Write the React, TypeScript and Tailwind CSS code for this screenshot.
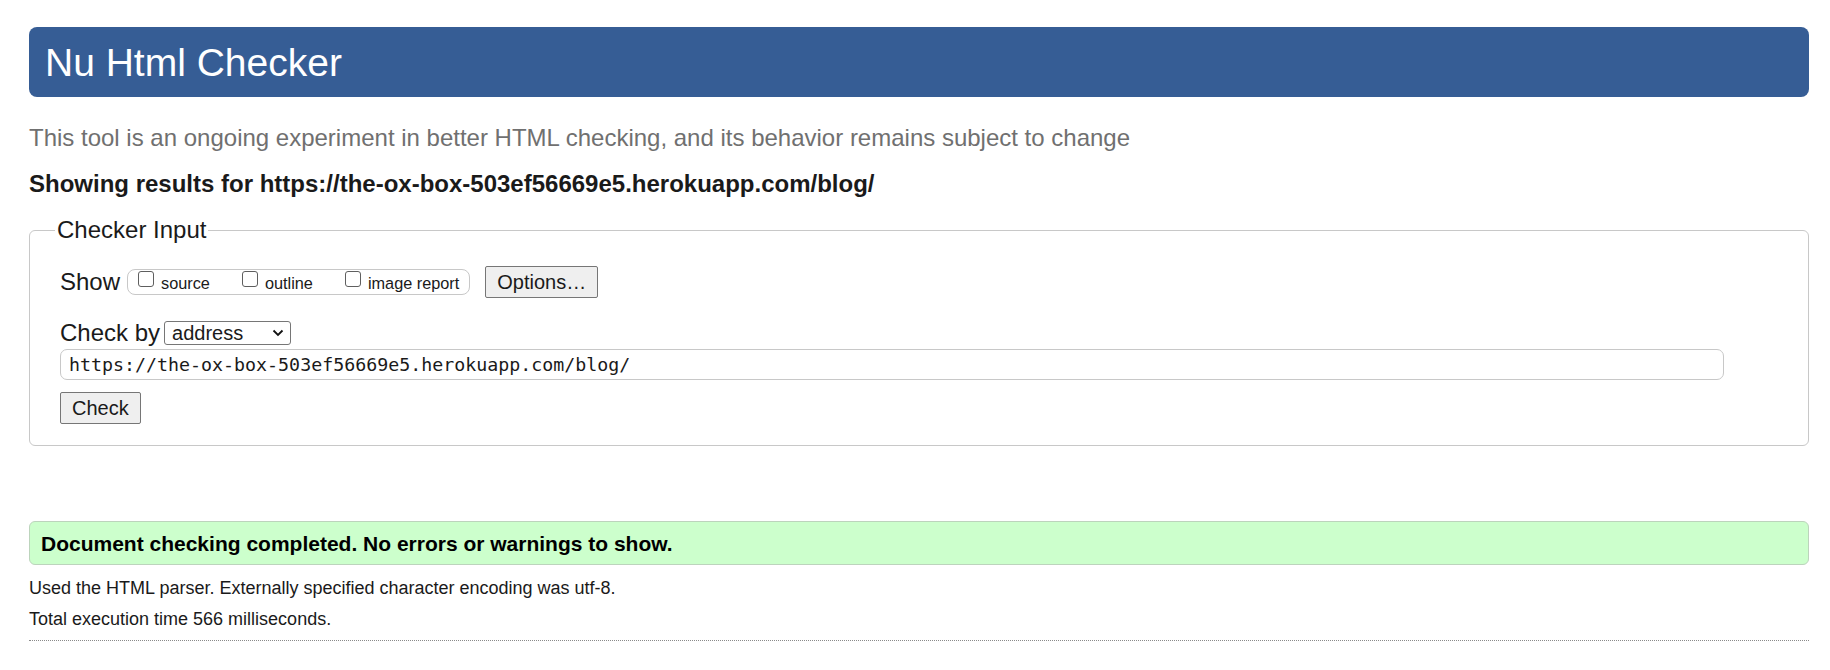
import React from 'react';

const url = 'https://the-ox-box-503ef56669e5.herokuapp.com/blog/';

const Box = ({ label }: { label: string }) => (
  <label className="flex items-start gap-[7px]">
    <span className="mt-[1px] block h-[16px] w-[16px] rounded-[3px] border border-[#5f5f5f] bg-white" />
    <span className="mt-[3px] text-[16.3px] leading-[20px]">{label}</span>
  </label>
);

export default function App() {
  return (
    <div className="min-h-screen bg-white pl-[29px] pr-[21px] pt-[27px] text-[#1a1a1a]" style={{ fontFamily: '"Liberation Sans", Arial, sans-serif' }}>
      {/* Kopfzeile */}
      <div className="flex h-[70px] items-center rounded-[8px] bg-[#365d95] pl-[16px]">
        <h1 className="text-[39px] leading-none text-white">Nu Html Checker</h1>
      </div>

      <p className="mt-[27px] text-[24px] leading-[28px] text-[#707070]">
        This tool is an ongoing experiment in better HTML checking, and its behavior remains subject to change
      </p>
      <p className="mt-[18px] text-[24px] font-bold leading-[28px]">Showing results for {url}</p>

      {/* Eingabe */}
      <fieldset className="mt-[18px] rounded-[6px] border border-[#c8c8c8] pb-[21px] pl-[30px]">
        <legend className="-ml-[5px] px-[2px] text-[24px] leading-[28px]">Checker Input</legend>

        <div className="mt-[22px] flex h-[32px] items-center">
          <span className="text-[24px] leading-[28px]">Show</span>
          <div className="ml-[7px] flex h-[26px] items-start gap-[32px] rounded-[8px] border border-[#c8c8c8] pl-[10px] pr-[10px]">
            <Box label="source" />
            <Box label="outline" />
            <Box label="image report" />
          </div>
          <button className="ml-[15px] h-[32px] rounded-[2px] border border-[#767676] bg-[#efefef] px-[11px] text-[20px] leading-none">
            Options…
          </button>
        </div>

        <div className="mt-[22px] flex h-[26px] items-center">
          <span className="text-[24px] leading-[28px]">Check by</span>
          <div className="ml-[4px] flex h-[24px] w-[127px] items-center justify-between rounded-[3px] border border-[#767676] pl-[7px] pr-[6px]">
            <span className="text-[20px] leading-none">address</span>
            <svg width="12" height="8" viewBox="0 0 12 8" fill="none">
              <path d="M1.5 1.5 6 6l4.5-4.5" stroke="#111" strokeWidth="1.8" />
            </svg>
          </div>
        </div>

        <div
          className="mt-[3px] flex h-[31px] w-[1664px] items-center rounded-[7px] border border-[#c8c8c8] pl-[8px] text-[18.3px]"
          style={{ fontFamily: '"DejaVu Sans Mono", monospace' }}
        >
          {url}
        </div>

        <button className="mt-[12px] h-[32px] rounded-[2px] border border-[#767676] bg-[#efefef] px-[11px] text-[20px] leading-none">
          Check
        </button>
      </fieldset>

      {/* Ergebnis */}
      <div className="mt-[75px] flex h-[44px] items-center rounded-[6px] border border-[#bcd4bc] bg-[#ccffcc] pl-[11px]">
        <span className="text-[21px] font-bold leading-none text-black">Document checking completed. No errors or warnings to show.</span>
      </div>
      <p className="mt-[13px] text-[18px] leading-[21px]">Used the HTML parser. Externally specified character encoding was utf-8.</p>
      <p className="mt-[10px] text-[18px] leading-[21px]">Total execution time 566 milliseconds.</p>
      <div className="mt-[10px] border-b border-dotted border-[#8a8a8a]" />
    </div>
  );
}
